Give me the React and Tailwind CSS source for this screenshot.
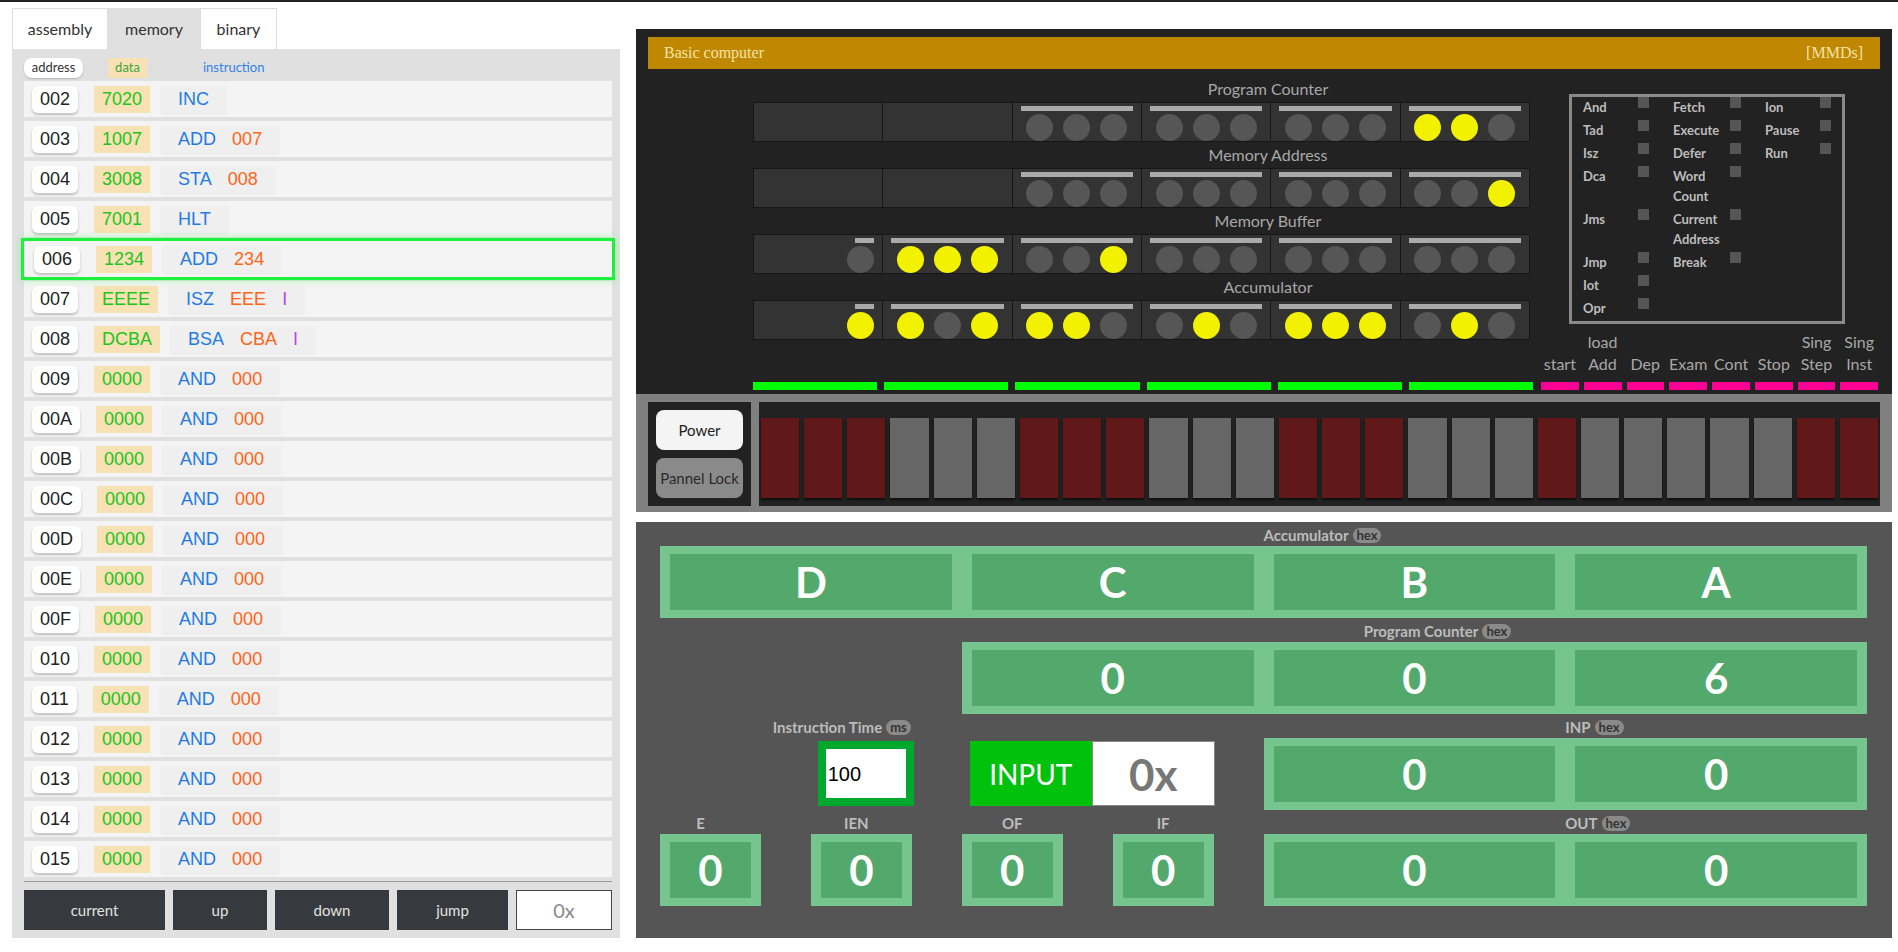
const memRows = [
  ['002', '7020', ['INC']],
  ['003', '1007', ['ADD', '007']],
  ['004', '3008', ['STA', '008']],
  ['005', '7001', ['HLT']],
  ['006', '1234', ['ADD', '234'], true],
  ['007', 'EEEE', ['ISZ', 'EEE', 'I']],
  ['008', 'DCBA', ['BSA', 'CBA', 'I']],
  ['009', '0000', ['AND', '000']],
  ['00A', '0000', ['AND', '000']],
  ['00B', '0000', ['AND', '000']],
  ['00C', '0000', ['AND', '000']],
  ['00D', '0000', ['AND', '000']],
  ['00E', '0000', ['AND', '000']],
  ['00F', '0000', ['AND', '000']],
  ['010', '0000', ['AND', '000']],
  ['011', '0000', ['AND', '000']],
  ['012', '0000', ['AND', '000']],
  ['013', '0000', ['AND', '000']],
  ['014', '0000', ['AND', '000']],
  ['015', '0000', ['AND', '000']],
];

const regs = [
  { name: 'Program Counter', cells: [null, null, [0, 0, 0], [0, 0, 0], [0, 0, 0], [1, 1, 0]] },
  { name: 'Memory Address', cells: [null, null, [0, 0, 0], [0, 0, 0], [0, 0, 0], [0, 0, 1]] },
  { name: 'Memory Buffer', cells: [[0], [1, 1, 1], [0, 0, 1], [0, 0, 0], [0, 0, 0], [0, 0, 0]] },
  { name: 'Accumulator', cells: [[1], [1, 0, 1], [1, 1, 0], [0, 1, 0], [1, 1, 1], [0, 1, 0]] },
];

const status = [
  ['And', 'Fetch', 'Ion'],
  ['Tad', 'Execute', 'Pause'],
  ['Isz', 'Defer', 'Run'],
  ['Dca', 'Word Count', null],
  ['Jms', 'Current Address', null],
  ['Jmp', 'Break', null],
  ['Iot', null, null],
  ['Opr', null, null],
];

const controls = [
  ['', 'start'], ['load', 'Add'], ['', 'Dep'], ['', 'Exam'],
  ['', 'Cont'], ['', 'Stop'], ['Sing', 'Step'], ['Sing', 'Inst'],
];

const switches = [1, 1, 1, 0, 0, 0, 1, 1, 1, 0, 0, 0, 1, 1, 1, 0, 0, 0, 1, 0, 0, 0, 0, 0, 1, 1];

function Instr({ parts }) {
  const colors = ['text-[#1e7be6]', 'text-[#ff6418]', 'text-[#b54ade]'];
  return (
    <div className="ml-[11px] h-[27px] px-[17px] flex items-center gap-4 bg-[#efefef] shadow-[0_1px_2px_rgba(0,0,0,0.06)]">
      {parts.map((p, i) => (
        <span key={i} className={colors[i]}>{p}</span>
      ))}
    </div>
  );
}

function MemoryPanel() {
  return (
    <div className="w-[608px] ml-3 mt-[6px] font-['Lato',sans-serif]">
      <div className="flex h-[41px] text-[16px] text-[#333]">
        <div className="w-[96px] flex items-center justify-center bg-white border border-[#dcdcdc] border-b-0">assembly</div>
        <div className="w-[92px] flex items-center justify-center bg-[#e0e0e0]">memory</div>
        <div className="w-[77px] flex items-center justify-center bg-white border border-[#dcdcdc] border-b-0">binary</div>
      </div>
      <div className="bg-[#e0e0e0] pl-3 pr-2 pt-[9px] pb-2">
        <div className="flex items-center h-5 mb-[3px] text-[13px]">
          <div className="w-[59px] h-5 flex items-center justify-center bg-white rounded-lg shadow-[0_1px_2px_rgba(0,0,0,0.2)] text-[#333]">address</div>
          <div className="ml-[25px] w-[39px] h-5 flex items-center justify-center bg-[#f8e1b4] text-[#3aa83a]">data</div>
          <div className="ml-[56px] text-[#2f80ed]">instruction</div>
        </div>
        <div className="font-['Liberation_Sans',Arial,sans-serif] text-[18px]">
          {memRows.map(([addr, data, ins, active]) => (
            <div
              key={addr}
              className={
                'h-9 mb-1 flex items-center bg-[#f4f4f4] ' +
                (active
                  ? 'pl-[10px] relative z-10 outline-[3px] outline-solid outline-[#1ef03e] shadow-[0_0_8px_2px_rgba(60,255,90,0.55)]'
                  : 'pl-2')
              }
            >
              <div className="h-[27px] px-2 flex items-center bg-white rounded-md shadow-[0_2px_3px_rgba(0,0,0,0.22)] text-[#222]">{addr}</div>
              <div className="ml-4 h-[27px] px-2 flex items-center bg-[#f8e1b4] text-[#1dc41d]">{data}</div>
              <Instr parts={ins} />
            </div>
          ))}
        </div>
        <div className="h-px bg-[#9a9a9a]" />
        <div className="mt-2 flex gap-2 h-10 text-[15px] text-[#e2e2e2]">
          <button className="w-[141px] bg-[#363a3e]">current</button>
          <button className="w-[94px] bg-[#363a3e]">up</button>
          <button className="w-[114px] bg-[#363a3e]">down</button>
          <button className="w-[111px] bg-[#363a3e]">jump</button>
          <div className="flex-1 bg-white border border-[#444] flex items-center justify-center text-[20px] text-[#8a8a8a]">0x</div>
        </div>
      </div>
    </div>
  );
}

function Light({ on }) {
  return <div className={'w-[27px] h-[27px] shrink-0 rounded-full ' + (on ? 'bg-[#f2f200]' : 'bg-[#565656]')} />;
}

function RegCell({ bits }) {
  if (!bits) return <div className="h-[38px] bg-[#333]" />;
  if (bits.length === 1) {
    return (
      <div className="h-[38px] bg-[#333] pt-[3px] pr-2 flex flex-col items-end overflow-hidden">
        <div className="w-[19px] h-[5px] bg-[#aaa]" />
        <div className="mt-[3px]"><Light on={bits[0]} /></div>
      </div>
    );
  }
  return (
    <div className="h-[38px] bg-[#333] pt-[3px] px-2 overflow-hidden">
      <div className="h-[5px] bg-[#aaa]" />
      <div className="mt-[3px] flex justify-center gap-[10px]">
        {bits.map((b, i) => <Light key={i} on={b} />)}
      </div>
    </div>
  );
}

function Machine() {
  return (
    <div className="font-['Lato',sans-serif]">
      <div className="bg-[#222] px-3 pt-2 pb-1">
        <div className="h-8 bg-[#c08800] flex items-center justify-between pl-4 pr-[17px] font-['Liberation_Serif',serif] text-[16px] text-[#f3e3a8]">
          <span>Basic computer</span>
          <span>[MMDs]</span>
        </div>
        <div className="flex pl-[105px]">
          <div className="w-[780px] flex flex-col pt-[11px]">
            {regs.map((r, i) => (
              <div key={r.name} className={i ? 'mt-1' : ''}>
                <div className="h-[22px] leading-[18px] pl-[250px] text-center text-[16px] text-[#a8a8a8]">{r.name}</div>
                <div className="w-[777px] grid grid-cols-6 gap-px p-px bg-[#161616]">
                  {r.cells.map((c, j) => <RegCell key={j} bits={c} />)}
                </div>
              </div>
            ))}
            <div className="mt-auto flex gap-[7px]">
              {[0, 1, 2, 3, 4, 5].map((k) => <div key={k} className="flex-1 h-2 bg-[#00ff00]" />)}
            </div>
          </div>
          <div className="ml-2 w-[337px] flex flex-col">
            <div className="mt-[25px] ml-7 w-[276px] h-[230px] border-[3px] border-[#8a8a8a] pl-[11px] pb-[3px]">
              <div className="grid grid-cols-[66px_68px_66px] gap-x-6 gap-y-[3px] text-[13px] font-bold leading-[20px] text-[#bdbdbd]">
                {status.flat().map((s, i) =>
                  s ? (
                    <div key={i} className="flex items-start">
                      <span className={i % 3 === 1 ? 'w-[57px]' : 'w-[55px]'}>{s}</span>
                      <span className="w-[11px] h-[11px] bg-[#555]" />
                    </div>
                  ) : (
                    <div key={i} />
                  )
                )}
              </div>
            </div>
            <div className="mt-[7px] flex gap-[5px] text-[16px] leading-[22px] text-[#a8a8a8]">
              {controls.map(([a, b], i) => (
                <div key={i} className="flex-1 flex flex-col items-center whitespace-nowrap">
                  <span className="h-[22px]">{a}</span>
                  <span>{b}</span>
                </div>
              ))}
            </div>
            <div className="mt-[7px] flex gap-[5px]">
              {controls.map((c, i) => <div key={i} className="flex-1 h-2 bg-[#ff0095]" />)}
            </div>
          </div>
        </div>
      </div>
      <div className="bg-[#808080] px-3 pt-2 pb-[6px] flex gap-2">
        <div className="w-[103px] bg-[#222] p-2 flex flex-col gap-2 text-[15px]">
          <div className="h-10 rounded-lg bg-[#f4f4f4] text-[#222] flex items-center justify-center">Power</div>
          <div className="h-10 rounded-lg bg-[#8a8a8a] text-[#2a2a2a] flex items-center justify-center whitespace-nowrap">Pannel Lock</div>
        </div>
        <div className="flex-1 bg-[#222] pt-4 pb-2 px-[2px] flex gap-[5px]">
          {switches.map((s, i) => (
            <div key={i} className={'flex-1 h-20 shadow-[0_2px_2px_rgba(0,0,0,0.6)] ' + (s ? 'bg-[#611818]' : 'bg-[#666]')} />
          ))}
        </div>
      </div>
    </div>
  );
}

function Hex({ children }) {
  return <span className="ml-1 px-[4px] rounded-full bg-[#8a8a8a] text-[#333] text-[13px] font-bold leading-[15px]">{children}</span>;
}

function Label({ children, unit, className }) {
  return (
    <div className={'h-5 flex items-center text-[15px] font-bold text-[#bcbcbc] ' + (className || '')}>
      <span>{children}</span>
      {unit && <Hex>{unit}</Hex>}
    </div>
  );
}

function Digits({ values }) {
  return (
    <div className="mt-px h-[72px] bg-[#76c48e] px-[10px] py-2 flex gap-5">
      {values.map((v, i) => (
        <div key={i} className="flex-1 bg-[#53a96b] flex items-center justify-center text-white text-[42px] font-bold">{v}</div>
      ))}
    </div>
  );
}

function Flag({ name, shift }) {
  return (
    <div>
      <div className={'w-[101px] h-5 flex items-center justify-center text-[15px] font-bold text-[#bcbcbc] ' + shift}>{name}</div>
      <div className="mt-px w-[101px] h-[72px] bg-[#76c48e] px-[10px] py-2">
        <div className="h-full bg-[#53a96b] flex items-center justify-center text-white text-[42px] font-bold">0</div>
      </div>
    </div>
  );
}

function Registers() {
  return (
    <div className="mt-[10px] bg-[#555] pl-6 pr-[25px] pt-[3px] pb-8 grid grid-cols-8 gap-y-[3px] font-['Lato',sans-serif]">
      <div className="col-span-8">
        <Label unit="hex" className="pl-[50%]">Accumulator</Label>
        <Digits values={['D', 'C', 'B', 'A']} />
      </div>
      <div className="col-span-2" />
      <div className="col-span-6">
        <Label unit="hex" className="pl-[402px]">Program Counter</Label>
        <Digits values={['0', '0', '6']} />
      </div>
      <div className="col-span-2 flex flex-col items-end pr-[48px]">
        <Label unit="ms" className="mr-[3px]">Instruction Time</Label>
        <div className="mt-1 w-[96px] h-[65px] bg-[#00a82d] p-2">
          <div className="h-full bg-white flex items-center pl-[2px] font-['Liberation_Sans',Arial,sans-serif] text-[20px] text-black">100</div>
        </div>
      </div>
      <div className="col-span-2 pl-2">
        <div className="h-5" />
        <div className="mt-1 flex h-[65px]">
          <div className="w-[122px] bg-[#00c20c] flex items-center justify-center text-white text-[28px]">INPUT</div>
          <div className="w-[123px] bg-white border border-[#888] flex items-center justify-center text-[#777] text-[44px] font-bold">0x</div>
        </div>
      </div>
      <div className="col-span-4">
        <Label unit="hex" className="pl-[50%]">INP</Label>
        <Digits values={['0', '0']} />
      </div>
      <Flag name="E" shift="pr-5" />
      <Flag name="IEN" shift="pr-[10px]" />
      <Flag name="OF" shift="" />
      <Flag name="IF" shift="" />
      <div className="col-span-4">
        <Label unit="hex" className="pl-[50%]">OUT</Label>
        <Digits values={['0', '0']} />
      </div>
    </div>
  );
}

export default function App() {
  return (
    <div className="w-[1898px] h-[952px] bg-white border-t-2 border-[#222] flex items-start overflow-hidden">
      <MemoryPanel />
      <div className="ml-4 mt-[27px] w-[1256px]">
        <Machine />
        <Registers />
      </div>
    </div>
  );
}
